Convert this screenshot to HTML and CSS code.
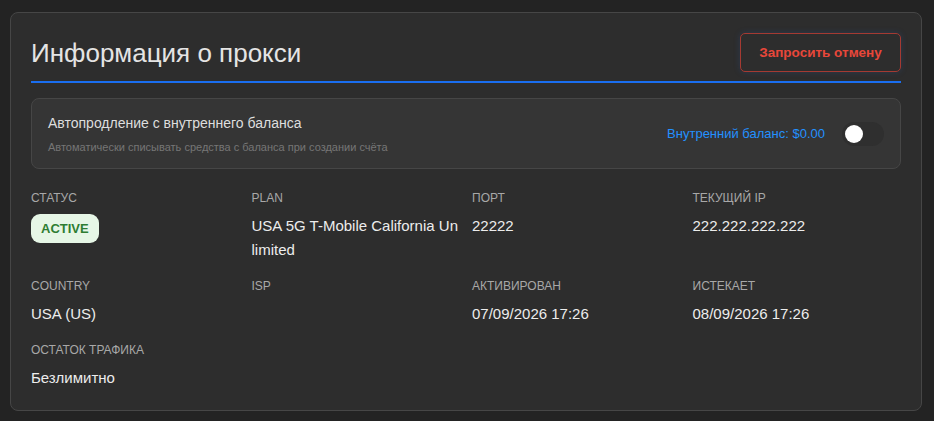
FILE: index.html
```html
<!DOCTYPE html>
<html lang="ru">
<head>
<meta charset="utf-8">
<title>Информация о прокси</title>
<link rel="stylesheet" href="styles.css">
</head>
<body>
<div class="page">
  <section class="card">
    <header class="card-header">
      <h1 class="title">Информация о прокси</h1>
      <button class="btn-cancel" type="button">Запросить отмену</button>
    </header>

    <div class="renew">
      <div class="renew-text">
        <div class="renew-title">Автопродление с внутреннего баланса</div>
        <div class="renew-sub">Автоматически списывать средства с баланса при создании счёта</div>
      </div>
      <div class="renew-right">
        <span class="balance">Внутренний баланс: $0.00</span>
        <span class="toggle"><span class="knob"></span></span>
      </div>
    </div>

    <div class="info-grid">
      <div class="field">
        <div class="label">Статус</div>
        <div class="value"><span class="badge">ACTIVE</span></div>
      </div>
      <div class="field">
        <div class="label">Plan</div>
        <div class="value breakable">USA 5G T-Mobile California Unlimited</div>
      </div>
      <div class="field">
        <div class="label">Порт</div>
        <div class="value">22222</div>
      </div>
      <div class="field">
        <div class="label">Текущий IP</div>
        <div class="value">222.222.222.222</div>
      </div>

      <div class="field">
        <div class="label">Country</div>
        <div class="value">USA (US)</div>
      </div>
      <div class="field">
        <div class="label">ISP</div>
        <div class="value"></div>
      </div>
      <div class="field">
        <div class="label">Активирован</div>
        <div class="value">07/09/2026 17:26</div>
      </div>
      <div class="field">
        <div class="label">Истекает</div>
        <div class="value">08/09/2026 17:26</div>
      </div>

      <div class="field">
        <div class="label">Остаток трафика</div>
        <div class="value">Безлимитно</div>
      </div>
    </div>
  </section>
</div>
</body>
</html>
```

FILE: styles.css
```css
* { box-sizing: border-box; }

html, body {
  margin: 0;
  padding: 0;
  background: #232323;
  font-family: "Liberation Sans", Arial, sans-serif;
  color: #e6e6e6;
}

.page {
  padding: 12px 12px 10px 10px;
}

.card {
  background: #2d2d2d;
  border: 1px solid #464646;
  border-radius: 8px;
  padding: 20px 20px 20px 20px;
}

.card-header {
  display: flex;
  align-items: center;
  justify-content: space-between;
  padding-bottom: 9px;
  border-bottom: 2px solid #1a6ef0;
  margin-bottom: 15px;
}

.title {
  margin: 0;
  font-size: 26px;
  font-weight: normal;
  color: #e4e4e4;
  line-height: 32px;
}

.btn-cancel {
  height: 39px;
  width: 161px;
  background: transparent;
  border: 1px solid #a53a32;
  border-radius: 5px;
  color: #e8473a;
  font-family: "Liberation Sans", Arial, sans-serif;
  font-weight: bold;
  font-size: 13.5px;
  padding: 0;
  box-shadow: 0 0 6px rgba(40, 90, 180, 0.25);
}

.renew {
  display: flex;
  align-items: center;
  justify-content: space-between;
  background: #353535;
  border: 1px solid #464646;
  border-radius: 8px;
  padding: 15px 16px 14px 16px;
  margin-bottom: 21px;
}

.renew-title {
  font-size: 14px;
  line-height: 18px;
  color: #dedede;
}

.renew-sub {
  margin-top: 8px;
  font-size: 11px;
  line-height: 14px;
  color: #767676;
}

.renew-right {
  display: flex;
  align-items: center;
  gap: 17px;
  margin-top: -1px;
}

.balance {
  color: #2391ff;
  font-size: 13px;
}

.toggle {
  display: inline-flex;
  align-items: center;
  width: 42px;
  height: 24px;
  border-radius: 12px;
  background: #2f2f2f;
  padding: 3px;
}

.knob {
  width: 18px;
  height: 18px;
  border-radius: 50%;
  background: #ffffff;
}

.info-grid {
  display: grid;
  grid-template-columns: repeat(4, 1fr);
  column-gap: 12px;
  row-gap: 16px;
}

.label {
  font-size: 12px;
  line-height: 16px;
  color: #a8a8a8;
  text-transform: uppercase;
  margin-bottom: 8px;
}

.value {
  font-size: 15px;
  line-height: 24px;
  color: #ececec;
  min-height: 24px;
}

.breakable {
  word-break: break-all;
}

.badge {
  display: inline-block;
  background: #e6f6e6;
  color: #2e7d32;
  font-weight: bold;
  font-size: 13px;
  line-height: 15px;
  padding: 7px 10px;
  border-radius: 9px;
}
```
